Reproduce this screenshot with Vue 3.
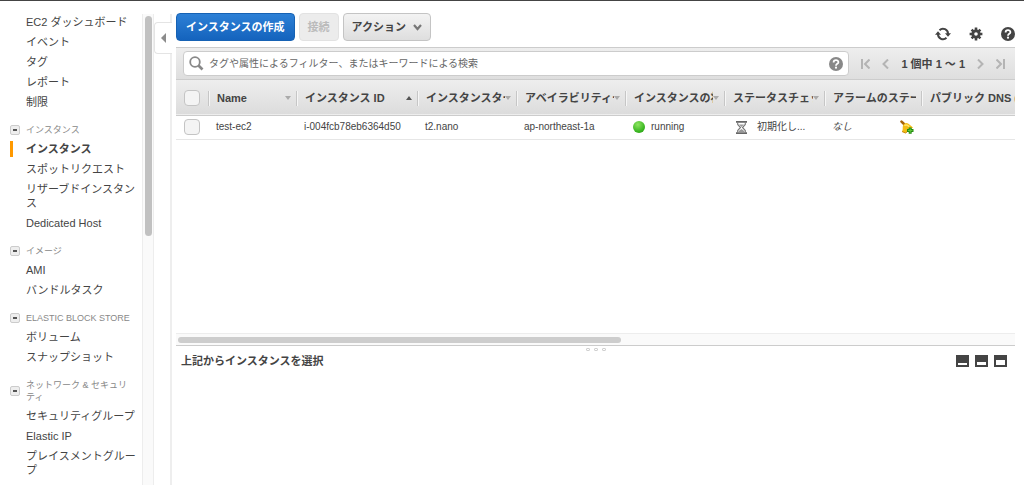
<script setup>
import { ref } from 'vue'

const topLinks = ['EC2 ダッシュボード', 'イベント', 'タグ', 'レポート', '制限']
const sections = [
  { title: 'インスタンス', items: ['インスタンス', 'スポットリクエスト', 'リザーブドインスタンス', 'Dedicated Host'] },
  { title: 'イメージ', items: ['AMI', 'バンドルタスク'] },
  { title: 'ELASTIC BLOCK STORE', items: ['ボリューム', 'スナップショット'] },
  { title: 'ネットワーク & セキュリティ', items: ['セキュリティグループ', 'Elastic IP', 'プレイスメントグループ'] },
]
const current = 'インスタンス'

const columns = [
  { key: 'name', label: 'Name', sort: 'down' },
  { key: 'id', label: 'インスタンス ID', sort: 'up' },
  { key: 'type', label: 'インスタンスター', sort: 'down' },
  { key: 'zone', label: 'アベイラビリティー', sort: 'down' },
  { key: 'state', label: 'インスタンスの状', sort: 'down' },
  { key: 'check', label: 'ステータスチェッ', sort: 'down' },
  { key: 'alarm', label: 'アラームのステー', sort: '' },
  { key: 'dns', label: 'パブリック DNS (I', sort: '' },
]
const query = ref('')
</script>

<template>
  <div class="console">
    <nav class="sidebar" aria-label="EC2">
      <div class="menu">
        <a v-for="link in topLinks" :key="link" href="#" class="item">{{ link }}</a>
        <template v-for="section in sections" :key="section.title">
          <div class="heading">
            <button type="button" class="collapse" :aria-label="section.title"></button>
            <span>{{ section.title }}</span>
          </div>
          <a
            v-for="item in section.items"
            :key="item"
            href="#"
            class="item"
            :class="{ current: item === current }"
          >{{ item }}</a>
        </template>
      </div>
      <div class="track"><div class="thumb"></div></div>
    </nav>

    <div class="divider">
      <button type="button" class="toggle" aria-label="サイドバーを閉じる">
        <svg width="5" height="10" viewBox="0 0 5 10"><path d="M5 0v10L0 5z" fill="#8c8c8c" /></svg>
      </button>
    </div>

    <main class="content">
      <section class="upper">
        <div class="actions">
          <button type="button" class="btn primary">インスタンスの作成</button>
          <button type="button" class="btn" disabled>接続</button>
          <button type="button" class="btn menu-btn">
            アクション
            <svg width="9" height="7" viewBox="0 0 9 7"><path d="M1 1l3.500 4L8 1" fill="none" stroke="#777" stroke-width="2.200" /></svg>
          </button>
          <div class="tools">
            <button type="button" class="icon" aria-label="更新">
              <svg width="16" height="14" viewBox="0 0 16 14">
                <g fill="none" stroke="#444" stroke-width="2">
                  <path d="M4.500 3.200A5 5 0 0 1 13 7" />
                  <path d="M11.500 10.800A5 5 0 0 1 3 7" />
                </g>
                <path d="M10 6.200h6L13 9.800zM0 7.800h6L3 4.200z" fill="#444" />
              </svg>
            </button>
            <button type="button" class="icon" aria-label="設定">
              <svg width="14" height="14" viewBox="0 0 14 14">
                <g stroke="#444" stroke-width="2.600">
                  <path d="M7 .6v3M7 10.400v3M.6 7h3M10.400 7h3M2.600 2.600l2 2M9.400 9.400l2 2M11.400 2.600l-2 2M4.600 9.400l-2 2" />
                </g>
                <circle cx="7" cy="7" r="3.200" fill="none" stroke="#444" stroke-width="2.800" />
              </svg>
            </button>
            <button type="button" class="icon" aria-label="ヘルプ">
              <svg width="14" height="14" viewBox="0 0 14 14">
                <circle cx="7" cy="7" r="7" fill="#444" />
                <path d="M4.600 5.400C4.600 2.300 9.400 2.400 9.400 5.200 9.400 6.900 7 6.800 7 8.700" fill="none" stroke="#fff" stroke-width="1.800" />
                <circle cx="7" cy="10.700" r="1.100" fill="#fff" />
              </svg>
            </button>
          </div>
        </div>

        <div class="filter">
          <div class="search">
            <svg width="15" height="15" viewBox="0 0 15 15">
              <circle cx="6" cy="6" r="4.800" fill="none" stroke="#888" stroke-width="1.800" />
              <path d="M9.500 9.500L13.500 13.500" stroke="#888" stroke-width="2.600" />
            </svg>
            <input
              v-model="query"
              type="text"
              aria-label="フィルター"
              placeholder="タグや属性によるフィルター、またはキーワードによる検索"
            />
            <button type="button" class="icon" aria-label="検索のヘルプ">
              <svg width="14" height="14" viewBox="0 0 14 14">
                <circle cx="7" cy="7" r="7" fill="#888" />
                <path d="M4.600 5.400C4.600 2.300 9.400 2.400 9.400 5.200 9.400 6.900 7 6.800 7 8.700" fill="none" stroke="#fff" stroke-width="1.800" />
                <circle cx="7" cy="10.700" r="1.100" fill="#fff" />
              </svg>
            </button>
          </div>
          <div class="pager">
            <button type="button" class="icon" aria-label="最初">
              <svg width="9" height="10" viewBox="0 0 9 10"><path d="M1 0v10M8.500 .5L4 5l4.500 4.500" /></svg>
            </button>
            <button type="button" class="icon" aria-label="前へ">
              <svg width="7" height="10" viewBox="0 0 7 10"><path d="M6 .5L1.500 5 6 9.500" /></svg>
            </button>
            <span class="range">1 個中 1 〜 1</span>
            <button type="button" class="icon" aria-label="次へ">
              <svg width="7" height="10" viewBox="0 0 7 10"><path d="M1 .5L5.500 5 1 9.500" /></svg>
            </button>
            <button type="button" class="icon" aria-label="最後">
              <svg width="9" height="10" viewBox="0 0 9 10"><path d="M8 0v10M.5 .5L5 5 .5 9.500" /></svg>
            </button>
          </div>
        </div>

        <div class="grid">
          <table>
            <colgroup>
              <col class="c-pick" />
              <col v-for="c in columns" :key="c.key" :class="'c-' + c.key" />
            </colgroup>
            <thead>
              <tr>
                <th class="pick"><input type="checkbox" aria-label="すべて選択" /></th>
                <th v-for="c in columns" :key="c.key" scope="col">
                  <div class="head">
                    <span class="label">{{ c.label }}</span>
                    <svg v-if="c.sort === 'down'" width="6" height="4" viewBox="0 0 6 4"><path d="M0 0h6L3 4z" fill="#aaa" /></svg>
                    <svg v-if="c.sort === 'up'" width="6" height="4" viewBox="0 0 6 4"><path d="M0 4h6L3 0z" fill="#555" /></svg>
                  </div>
                </th>
              </tr>
            </thead>
            <tbody>
              <tr>
                <td class="pick"><input type="checkbox" aria-label="test-ec2" /></td>
                <td>test-ec2</td>
                <td>i-004fcb78eb6364d50</td>
                <td>t2.nano</td>
                <td>ap-northeast-1a</td>
                <td>
                  <div class="cell"><span class="dot"></span>running</div>
                </td>
                <td>
                  <div class="cell waiting">
                    <svg width="11" height="13" viewBox="0 0 11 13">
                      <path d="M0 .9h11M0 12.100h11" stroke="#666" stroke-width="1.700" />
                      <path d="M1.700 1.500v2L4.500 6.500 1.700 9.500v2M9.300 1.500v2L6.500 6.500l2.800 3v2" fill="none" stroke="#777" stroke-width="1.100" />
                      <path d="M3 3.500h5L5.500 6zM2.300 11.500c0-2 2-2.500 3.200-3.500 1.200 1 3.200 1.500 3.200 3.500z" fill="#999" />
                    </svg>
                    初期化し...
                  </div>
                </td>
                <td>
                  <div class="cell alarm">
                    <em>なし</em>
                    <button type="button" class="icon" aria-label="アラームの作成">
                      <svg width="14" height="14" viewBox="0 0 14 14">
                        <path d="M1.500 1.600L4 4" stroke="#a5640c" stroke-width="2.600" stroke-linecap="round" />
                        <path d="M3 5.500C4 3 6.500 2.300 8.500 3.800l4.500 3.700L5.500 13 2 11.500C3.300 9.500 2.300 7.500 3 5.500z" fill="#f3bd15" />
                        <path d="M4.500 5.700c1.300-1.300 3.300-.3 4.700 1" fill="none" stroke="#ffe46c" stroke-width="1.600" />
                        <path d="M2 11.500l3.500 1.500 2-1.500" fill="none" stroke="#c78508" />
                        <path d="M8.700 7.500h3v1.500h1.800v3h-1.800v1.700h-3v-1.700H7v-3h1.700z" fill="#258c13" />
                        <path d="M10.200 8.500v4.200M8 10.500h4.500" stroke="#61c83c" stroke-width="1.100" />
                      </svg>
                    </button>
                  </div>
                </td>
                <td></td>
              </tr>
            </tbody>
          </table>
        </div>
        <div class="hscroll"><div class="hthumb"></div></div>
      </section>

      <section class="details">
        <div class="grip"><i></i><i></i><i></i></div>
        <div class="details-bar">
          <h2>上記からインスタンスを選択</h2>
          <div class="layouts">
            <button type="button" class="icon" aria-label="下部を最小化">
              <svg width="13" height="12" viewBox="0 0 13 12"><path d="M0 0h13v12H0z" fill="#444" /><path d="M2 8h9v2H2z" fill="#fff" /></svg>
            </button>
            <button type="button" class="icon" aria-label="半分に分割">
              <svg width="13" height="12" viewBox="0 0 13 12"><path d="M0 0h13v12H0z" fill="#444" /><path d="M2 7h9v3H2z" fill="#fff" /></svg>
            </button>
            <button type="button" class="icon" aria-label="下部を最大化">
              <svg width="13" height="12" viewBox="0 0 13 12"><path d="M0 0h13v12H0z" fill="#444" /><path d="M2 5h9v5H2z" fill="#fff" /></svg>
            </button>
          </div>
        </div>
      </section>
    </main>
  </div>
</template>

<style>
body {
  margin: 0;
  background: #fff;
}
</style>

<style scoped>
* {
  box-sizing: border-box;
}
.console {
  display: flex;
  height: 100vh;
  border-top: 1px solid #444;
  padding: 0 9px 7px 0;
  overflow: hidden;
  color: #444;
  font: 11px/14px "Liberation Sans", "Noto Sans CJK JP", sans-serif;
}
button,
input {
  font: inherit;
  color: inherit;
}
svg {
  display: block;
  flex: none;
}
.icon {
  display: block;
  border: 0;
  padding: 0;
  background: none;
}

.sidebar {
  display: flex;
  flex: none;
  width: 154px;
}
.menu {
  flex: 1;
  padding-top: 11px;
  overflow: hidden;
}
.item {
  display: block;
  padding: 3px 0 3px 26px;
  color: #444;
  text-decoration: none;
  word-break: break-all;
}
.item.current {
  font-weight: bold;
  background: linear-gradient(#f90, #f90) 10px 2px / 3px 16px no-repeat;
}
.heading {
  display: flex;
  align-items: center;
  gap: 6px;
  margin: 12px 0 3px;
  padding-left: 10px;
  color: #888;
  font-size: 9px;
  line-height: 12px;
}
.heading span {
  flex: 1;
  padding-right: 6px;
}
.collapse {
  flex: none;
  width: 10px;
  height: 10px;
  padding: 0;
  border: 1px solid #ccc;
  border-radius: 2px;
  background: linear-gradient(#555, #555) center / 4px 2px no-repeat, #eee;
}
.track {
  width: 12px;
  margin-top: 13px;
  padding: 2px 2px 0;
  border: solid #ededed;
  border-width: 0 1px;
  background: #fafafa;
}
.thumb {
  width: 7px;
  height: 47%;
  border-radius: 4px;
  background: #c1c1c1;
}

.divider {
  flex: none;
  width: 18px;
  margin-top: 13px;
  padding-top: 8px;
  background: linear-gradient(#eee, #eee) right / 2px 100% no-repeat;
}
.toggle {
  display: flex;
  align-items: center;
  width: 100%;
  height: 32px;
  padding: 0 0 0 6px;
  border: 1px solid #e4e4e4;
  border-right: 0;
  border-radius: 4px 0 0 4px;
  background: #fff;
}

.content {
  flex: 1;
  display: flex;
  flex-direction: column;
  min-width: 0;
  padding-left: 4px;
}
.upper {
  flex: 1;
  display: flex;
  flex-direction: column;
  min-height: 0;
}
.actions {
  display: flex;
  gap: 4px;
  padding: 12px 0 6px;
}
.btn {
  height: 28px;
  padding: 0 8px;
  border: 1px solid #c4c4c4;
  border-radius: 4px;
  background: linear-gradient(#f3f3f3, #dedede);
  font-weight: bold;
  white-space: nowrap;
}
.primary {
  padding: 0 9px;
  border-color: #1662b4;
  background: linear-gradient(#2d80d6, #1463bd);
  color: #fff;
}
.btn:disabled {
  border-color: #e2e2e2;
  background: #ececec;
  color: #bbb;
}
.menu-btn {
  display: flex;
  align-items: center;
  gap: 7px;
}
.tools {
  display: flex;
  align-items: center;
  gap: 18px;
  margin-left: auto;
  padding-top: 14px;
}

.filter {
  display: flex;
  align-items: center;
  gap: 12px;
  height: 33px;
  padding: 0 10px 0 7px;
  border: solid #ccc;
  border-width: 1px 0;
  background: linear-gradient(#eee, #dedede);
}
.search {
  flex: 1;
  display: flex;
  align-items: center;
  gap: 5px;
  height: 25px;
  padding: 0 5px;
  border: 1px solid #ccc;
  border-radius: 4px;
  background: #fff;
}
.search input {
  flex: 1;
  min-width: 0;
  padding: 0;
  border: 0;
  outline: 0;
  background: none;
  font-size: 10px;
}
.search input::placeholder {
  color: #666;
  opacity: 1;
}
.pager {
  display: flex;
  align-items: center;
  gap: 12px;
}
.pager path {
  fill: none;
  stroke: #b4b4b4;
  stroke-width: 2;
}
.range {
  font-weight: bold;
  white-space: nowrap;
}

.grid {
  flex: 1;
  min-height: 0;
  overflow: hidden;
}
table {
  width: 100%;
  table-layout: fixed;
  border-collapse: collapse;
  font-size: 10px;
}
.c-pick { width: 32px; }
.c-name { width: 88px; }
.c-id { width: 121px; }
.c-type { width: 99px; }
.c-zone { width: 109px; }
.c-state { width: 99px; }
.c-check { width: 100px; }
.c-alarm { width: 97px; }
thead tr {
  height: 35px;
  border-bottom: 1px solid #ccc;
  background: linear-gradient(#eee, #dcdcdc);
}
th,
td {
  padding: 0;
  text-align: left;
  white-space: nowrap;
  overflow: hidden;
}
th {
  padding-top: 2px;
  font-size: 11px;
}
tbody tr {
  height: 24px;
  border-bottom: 1px solid #e6e6e6;
}
td {
  padding-left: 8px;
}
.pick {
  padding-left: 8px;
}
.pick input {
  display: block;
  appearance: none;
  width: 16px;
  height: 16px;
  margin: 0;
  border: 1px solid #c4c4c4;
  border-radius: 4px;
  background: #f4f4f4;
}
.head {
  display: flex;
  align-items: center;
  height: 15px;
  padding: 0 5px 0 8px;
  border-left: 1px solid #c6c6c6;
  box-shadow: inset 1px 0 #f6f6f6;
}
th:last-child .head {
  padding-right: 0;
}
.label {
  flex: 1;
  min-width: 0;
  overflow: hidden;
}
.cell {
  display: flex;
  align-items: center;
  gap: 6px;
}
.dot {
  width: 12px;
  height: 12px;
  border-radius: 50%;
  background: radial-gradient(circle at 40% 30%, #8ee561, #37b41f 65%, #249011);
}
.waiting {
  gap: 10px;
  padding-left: 4px;
}
.alarm {
  justify-content: space-between;
  padding-right: 7px;
}

.hscroll {
  height: 12px;
  padding: 3px 2px;
  border-top: 1px solid #ededed;
  background: #fafafa;
}
.hthumb {
  width: 53%;
  height: 6px;
  border-radius: 3px;
  background: #cdcdcd;
}
.details {
  flex: none;
  height: 29%;
  border-top: 1px solid #ccc;
}
.grip {
  display: flex;
  justify-content: center;
  gap: 4px;
  padding-top: 2px;
}
.grip i {
  width: 4px;
  height: 3px;
  border: 1px solid #d0d0d0;
  border-radius: 1px;
}
.details-bar {
  display: flex;
  align-items: center;
  justify-content: space-between;
  padding: 3px 8px 0 5px;
}
h2 {
  margin: 0;
  font-size: 11px;
  line-height: 14px;
}
.layouts {
  display: flex;
  gap: 6px;
}
</style>
